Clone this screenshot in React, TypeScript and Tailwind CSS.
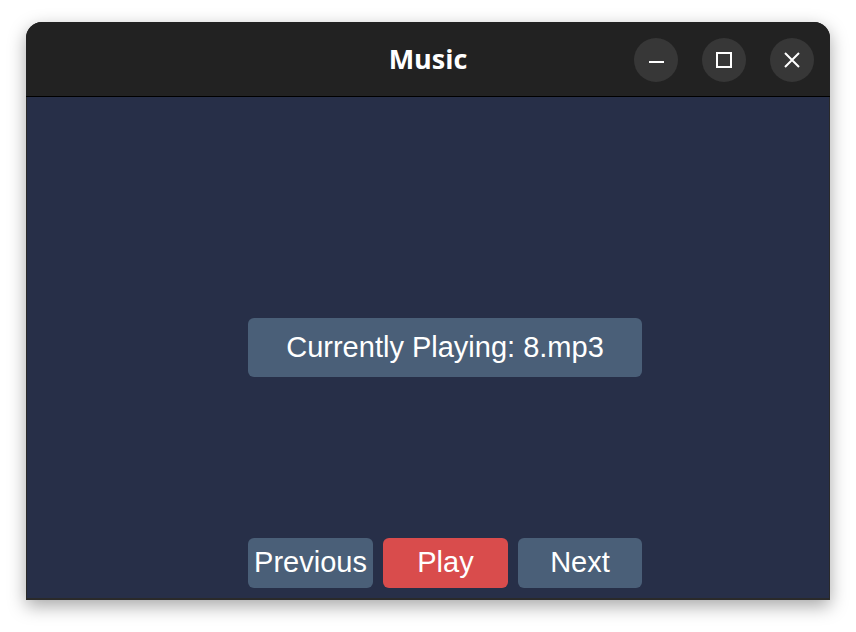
const MinIcon = () => (
  <svg width="16" height="16" viewBox="0 0 16 16">
    <rect x="1" y="9" width="16" height="2" fill="#ffffff" />
  </svg>
);

const MaxIcon = () => (
  <svg width="16" height="16" viewBox="0 0 16 16">
    <rect x="1" y="1" width="14" height="14" fill="none" stroke="#ffffff" strokeWidth="2" />
  </svg>
);

const CloseIcon = () => (
  <svg width="16" height="16" viewBox="0 0 16 16">
    <path d="M1 1 L15 15 M15 1 L1 15" stroke="#ffffff" strokeWidth="2" />
  </svg>
);

const App = () => {
  const controls = [<MinIcon key="min" />, <MaxIcon key="max" />, <CloseIcon key="close" />];

  return (
    <div className="w-[856px] h-[632px] bg-white pt-[22px] pl-[26px]">
      <div className="w-[804px] h-[578px] flex flex-col rounded-t-[16px] bg-[#2a2a2a] shadow-[0_6px_18px_rgba(0,0,0,0.35)] overflow-hidden">
        <div className="relative h-[74px] shrink-0 bg-[#222222] flex items-center justify-center">
          <span
            className="text-white text-[27px] font-bold"
            style={{ fontFamily: '"Open Sans", sans-serif' }}
          >
            Music
          </span>
          <div className="absolute right-[16px] top-[16px] flex gap-[24px]">
            {controls.map((icon, i) => (
              <button
                key={i}
                className="size-[44px] rounded-full bg-[#373737] flex items-center justify-center"
              >
                {icon}
              </button>
            ))}
          </div>
        </div>
        <div className="h-px shrink-0 bg-black" />
        <div
          className="mx-px h-[501px] shrink-0 bg-[#272f48] flex flex-col pl-[221px] pt-[221px] pb-[10px]"
          style={{ fontFamily: '"Liberation Sans", Arial, sans-serif' }}
        >
          <div className="w-[394px] h-[59px] rounded-[6px] bg-[#4a5f78] flex items-center justify-center text-white text-[29px]">
            Currently Playing: 8.mp3
          </div>
          <div className="mt-auto flex gap-[10px] text-white text-[29px]">
            <button className="w-[125px] h-[50px] rounded-[6px] bg-[#4a5f78] flex items-center justify-center">
              Previous
            </button>
            <button className="w-[125px] h-[50px] rounded-[6px] bg-[#d94c4c] flex items-center justify-center">
              Play
            </button>
            <button className="w-[124px] h-[50px] rounded-[6px] bg-[#4a5f78] flex items-center justify-center">
              Next
            </button>
          </div>
        </div>
      </div>
    </div>
  );
};

export default App;
